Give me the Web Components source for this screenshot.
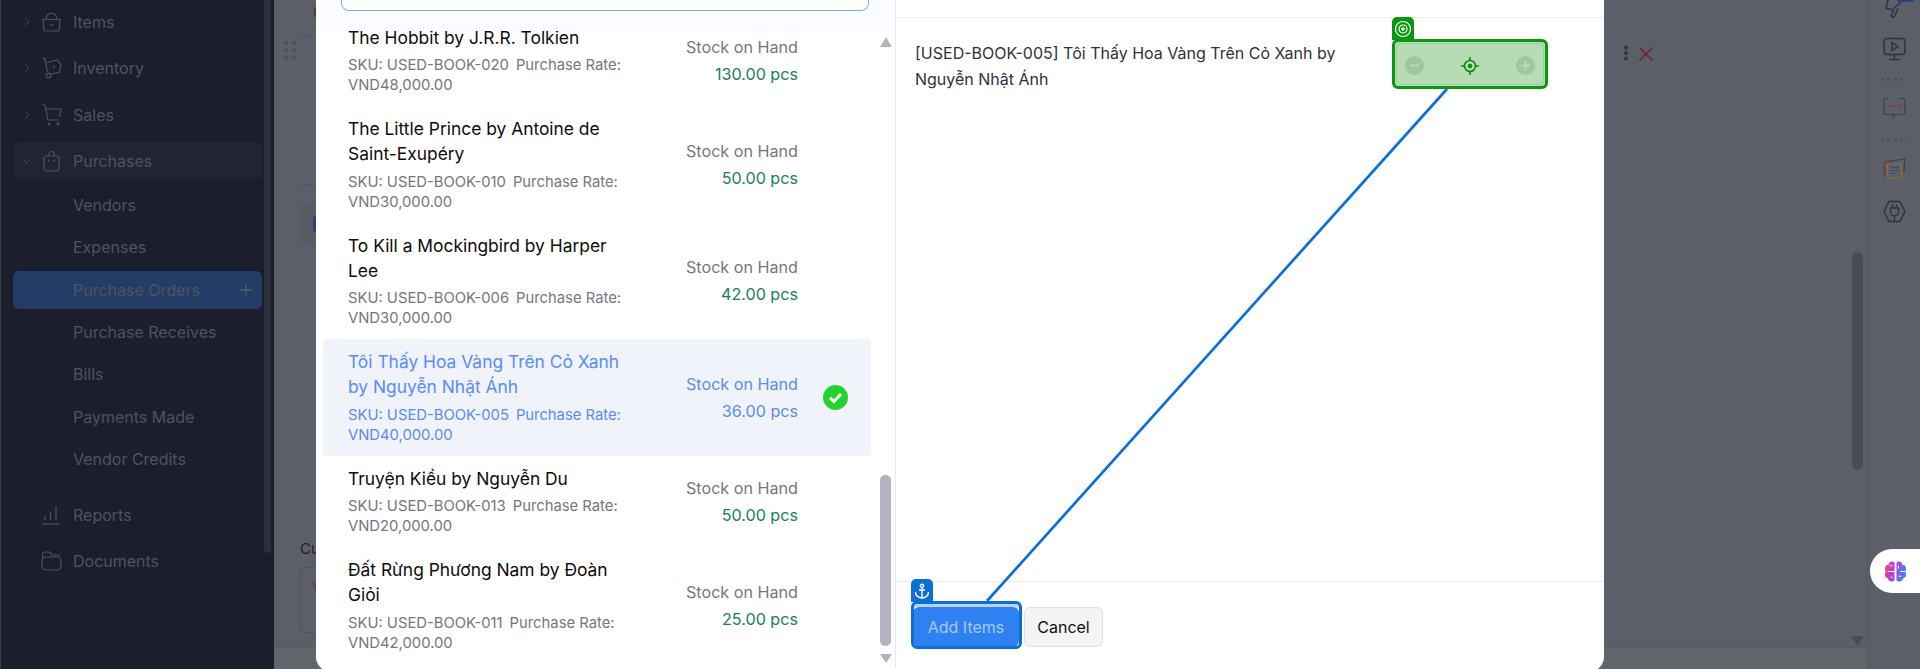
<!DOCTYPE html>
<html>
<head>
<meta charset="utf-8">
<title>Select items</title>
<style>
  html, body { margin: 0; padding: 0; height: 100%; overflow: hidden; }
  body { font-family: Inter, "Noto Sans", sans-serif; background: #5c5f68; }
</style>
</head>
<body>
<app-shell>
  <side-bar slot="side"></side-bar>
  <back-page slot="back"></back-page>
  <item-modal slot="modal">
    <item-row slot="items" name="The Hobbit by J.R.R. Tolkien" sku="USED-BOOK-020" rate="VND48,000.00" stock="130.00 pcs" h="92"></item-row>
    <item-row slot="items" name="The Little Prince by Antoine de Saint-Exupéry" sku="USED-BOOK-010" rate="VND30,000.00" stock="50.00 pcs" h="116"></item-row>
    <item-row slot="items" name="To Kill a Mockingbird by Harper Lee" sku="USED-BOOK-006" rate="VND30,000.00" stock="42.00 pcs" h="116.5"></item-row>
    <item-row slot="items" name="Tôi Thấy Hoa Vàng Trên Cỏ Xanh by Nguyễn Nhật Ánh" sku="USED-BOOK-005" rate="VND40,000.00" stock="36.00 pcs" h="117" selected></item-row>
    <item-row slot="items" name="Truyện Kiều by Nguyễn Du" sku="USED-BOOK-013" rate="VND20,000.00" stock="50.00 pcs" h="91"></item-row>
    <item-row slot="items" name="Đất Rừng Phương Nam by Đoàn Giỏi" sku="USED-BOOK-011" rate="VND42,000.00" stock="25.00 pcs" h="117"></item-row>
  </item-modal>
</app-shell>

<script>
  class AppShell extends HTMLElement {
    constructor() {
      super();
      this.attachShadow({mode: 'open'}).innerHTML = `
        <style>
          :host { display: flex; width: 1920px; height: 669px; position: relative; overflow: hidden; }
          .side { flex: 0 0 274px; }
          .back { flex: 1; min-width: 0; }
        </style>
        <div class="side"><slot name="side"></slot></div>
        <div class="back"><slot name="back"></slot></div>
        <slot name="modal"></slot>
      `;
    }
  }

  const ICONS = {
    items: '<path d="M2 8.500h17l-.7 9a2.500 2.500 0 0 1-2.500 2.500H5.200a2.500 2.500 0 0 1-2.500-2.500z"/><path d="M5 8.500C5 5 7.500 2 10.500 2S16 5 16 8.500"/><path d="M8.500 14h4"/>',
    inventory: '<path d="M1 1l3 .8 2.500 13"/><path d="M6 5.500L16.500 3 20 8l-1.500 7L8.500 17.500"/><circle cx="7.500" cy="18.500" r="2.300"/><circle cx="13" cy="10" r=".5"/>',
    sales: '<path d="M1 1h3l3 15h11"/><path d="M5 5h15l-1.500 8"/><circle cx="8" cy="20" r=".8"/><circle cx="17" cy="20" r=".8"/>',
    purchases: '<rect x="3" y="6" width="15" height="15" rx="3"/><path d="M7.500 6c0-2.500 1.300-4.500 3-4.500s3 2 3 4.500"/><circle cx="8" cy="10.500" r=".4"/><circle cx="13" cy="10.500" r=".4"/>',
    reports: '<path d="M1 20h17"/><path d="M4 11.500v5M9.500 8v8.500M15 2v14.500"/>',
    documents: '<path d="M1.500 8V5a3 3 0 0 1 3-3h4l2.500 3h7a2.500 2.500 0 0 1 1 .5"/><rect x="1" y="7" width="19" height="13" rx="4"/>'
  };

  class SideBar extends HTMLElement {
    constructor() {
      super();
      const top = (icon, label, chev) => `
        <div class="top ${chev === 'open' ? 'open' : ''}">
          <span class="chev">${chev === 'open'
            ? '<svg width="10" height="10" viewBox="0 0 10 10"><path d="M1 3l4 4 4-4"/></svg>'
            : chev ? '<svg width="10" height="10" viewBox="0 0 10 10"><path d="M3 1l4 4-4 4"/></svg>' : ''}</span>
          <svg class="ic" width="21" height="22" viewBox="0 0 21 22">${ICONS[icon]}</svg>
          <span>${label}</span>
        </div>`;
      this.attachShadow({mode: 'open'}).innerHTML = `
        <style>
          :host { display: block; height: 669px; background: #1b1f2d; border-left: 1px solid #3a3c44; box-sizing: border-box; font-size: 16px; color: #4f535f; position: relative; }
          .list { display: flex; flex-direction: column; padding: 3.500px 0 0 12px; width: 261px; box-sizing: border-box; }
          .top { display: flex; align-items: center; height: 37px; margin-bottom: 9.300px; border-radius: 6px; }
          .top.open { background: #212532; }
          .chev { flex: 0 0 28px; display: flex; justify-content: center; }
          .chev svg { fill: none; stroke: #3f434f; stroke-width: 1; }
          .ic { fill: none; stroke: #4f535f; stroke-width: 1.200; margin-right: 11px; flex: none; }
          .sub { height: 38px; display: flex; align-items: center; padding: 0 10px 0 60px; border-radius: 6px; margin-bottom: 4.400px; justify-content: space-between; }
          .sub.on { background: #243d66; }
          .sub svg { stroke: #55596a; stroke-width: 1.300; fill: none; }
          .gap { height: 14px; }
          .thumb { position: absolute; left: 263px; top: 0; width: 7px; height: 553px; background: #2b2f3c; border-radius: 0 0 4px 4px; }
        </style>
        <div class="list">
          ${top('items', 'Items', true)}
          ${top('inventory', 'Inventory', true)}
          ${top('sales', 'Sales', true)}
          ${top('purchases', 'Purchases', 'open')}
          <div class="sub" style="margin-top:-2.800px">Vendors</div>
          <div class="sub">Expenses</div>
          <div class="sub on">Purchase Orders<svg width="12" height="12" viewBox="0 0 12 12"><path d="M6 0v12M0 6h12"/></svg></div>
          <div class="sub">Purchase Receives</div>
          <div class="sub">Bills</div>
          <div class="sub">Payments Made</div>
          <div class="sub">Vendor Credits</div>
          <div class="gap"></div>
          ${top('reports', 'Reports', false)}
          ${top('documents', 'Documents', false)}
        </div>
        <div class="thumb"></div>
      `;
    }
  }

  class BackPage extends HTMLElement {
    constructor() {
      super();
      this.attachShadow({mode: 'open'}).innerHTML = `
        <style>
          :host { display: block; height: 669px; position: relative; color: #16181d; font-size: 15px; }
          .abs { position: absolute; }
          .rail { position: absolute; left: 1593px; top: 0; width: 51px; height: 100%; border-left: 1px solid #565962; }
          .dots { position: absolute; left: 1607px; width: 27px; height: 3px; background-image: repeating-linear-gradient(90deg,#50535c 0 3px,transparent 3px 6.400px); }
          svg { fill: none; display: block; }
        </style>
        <div class="abs" style="left:0;top:647px;width:1593px;height:22px;background:#62656c;border-top:1px solid #575a62;box-sizing:border-box"></div>
        <div class="abs" style="left:9px;top:40px"><svg width="14" height="21" viewBox="0 0 14 21"><g style="fill:#4f525b"><circle cx="3" cy="3" r="2.300"/><circle cx="11" cy="3" r="2.300"/><circle cx="3" cy="10.500" r="2.300"/><circle cx="11" cy="10.500" r="2.300"/><circle cx="3" cy="18" r="2.300"/><circle cx="11" cy="18" r="2.300"/></g></svg></div>
        <div class="abs" style="left:40px;top:7px;width:2px;height:10px;background:#5f3c22"></div>
        <div class="abs" style="left:26px;top:35px;width:16px;height:1px;background:#54575f"></div>
        <div class="abs" style="left:26px;top:184px;width:16px;height:1px;background:#54575f"></div>
        <div class="abs" style="left:26px;top:204px;width:16px;height:40px;background:#585b63;border-radius:6px 0 0 6px"></div>
        <div class="abs" style="left:39px;top:216px;width:3px;height:16px;background:#25467c;border-radius:8px 0 0 8px"></div>
        <div class="abs" style="left:26px;top:539px;color:#1e2026">Cu</div>
        <div class="abs" style="left:26px;top:567px;width:30px;height:66px;border:1px solid #50535c;border-radius:6px;box-sizing:border-box"></div>
        <div class="abs" style="left:38px;top:578px;color:#45474f">V</div>
        <div class="abs" style="left:1349px;top:44px"><svg width="6" height="18" viewBox="0 0 6 18"><g style="fill:#34363c"><circle cx="3" cy="3.500" r="2"/><circle cx="3" cy="9" r="2"/><circle cx="3" cy="14.500" r="2"/></g></svg></div>
        <div class="abs" style="left:1365px;top:46.500px"><svg width="14" height="14" viewBox="0 0 14 14"><path d="M.5 .5l13 13M13.500 .5l-13 13" stroke="#6e2b35" stroke-width="1.800"/></svg></div>
        <div class="abs" style="left:1578px;top:252px;width:11px;height:218px;border-radius:6px;background:#4a4c58"></div>
        <div class="abs" style="left:1577px;top:636px"><svg width="13" height="10" viewBox="0 0 13 10"><path d="M0 0h13L6.500 10z" style="fill:#4a4c58"/></svg></div>
        <div class="rail"></div>
        <div class="abs" style="left:1623px;top:0;width:17px;height:2px;background:#25467c;border-radius:0 0 6px 6px"></div>
        <div class="abs" style="left:1611px;top:0"><svg width="20" height="18" viewBox="0 0 20 18" stroke="#2f3340" stroke-width="1.500"><path d="M3 0L1 8l6 2 9-8"/><path d="M9 10l-3 6 3 1.500 4-9"/></svg></div>
        <div class="abs" style="left:1609px;top:37px"><svg width="23" height="24" viewBox="0 0 23 24" stroke="#2f3340" stroke-width="1.500"><rect x="1" y="1.500" width="21" height="16" rx="3"/><path d="M9 5.500l6 4-6 4zM11.500 17.500V22M6 22.500h11"/></svg></div>
        <div class="dots" style="top:78px"></div>
        <div class="abs" style="left:1609px;top:97px"><svg width="23" height="24" viewBox="0 0 23 24" stroke="#2c4468" stroke-width="1.200"><path d="M6 1.500H3a2 2 0 0 0-2 2v12a2 2 0 0 0 2 2h9l-2.500 4.500M16 1.500h4a2 2 0 0 1 2 2v12a2 2 0 0 1-2 2h-6"/><path d="M6 9h2.200M10.500 9h2.200M15 9h2.200" stroke="#9b2b34" stroke-width="1.800"/></svg></div>
        <div class="dots" style="top:138px"></div>
        <div class="abs" style="left:1609px;top:158px"><svg width="23" height="22" viewBox="0 0 23 22" stroke-width="1.200"><path d="M1 4l6-1v15H2z" stroke="#7a3038"/><path d="M7 3l15-2-1 13" stroke="#2c4468"/><rect x="4.500" y="6" width="14" height="14" rx="1" stroke="#8a7338" style="fill:#5c5f68"/><path d="M7.500 9.500h8M7.500 12.500h8M7.500 15.500h5" stroke="#2c4d80"/></svg></div>
        <div class="abs" style="left:1609px;top:200px"><svg width="23" height="23" viewBox="0 0 23 23" stroke="#2f3340" stroke-width="1.400"><path d="M6 1.500h11l5 10-5 10H6l-5-10z"/><path d="M7.500 8v4a4 4 0 0 0 8 0V8zM9.500 8V4.500M13.500 8V4.500M11.500 16v5.500"/></svg></div>
        <div class="abs" style="left:1596px;top:549px;width:50px;height:44px;background:#fff;border-radius:22px 0 0 22px"></div>
        <div class="abs" style="left:1610px;top:560px"><svg width="23" height="23" viewBox="0 0 24 24"><defs><linearGradient id="br" x1="0" y1="0" x2="1" y2="0.300"><stop offset="0" stop-color="#f06a2a"/><stop offset=".35" stop-color="#d632c8"/><stop offset="1" stop-color="#4d7cf0"/></linearGradient></defs><path d="M11 3a3 3 0 0 0-3-1.500A3.500 3.500 0 0 0 5 5 4 4 0 0 0 1 9c0 1.500.5 2.500 1 3-.5.500-1 1.500-1 3a4 4 0 0 0 3 4c.5 2 2 3.500 4 3.500 1.500 0 2.500-.5 3-1.500zM13 3a3 3 0 0 1 3-1.500A3.500 3.500 0 0 1 19 5a4 4 0 0 1 4 4c0 1.500-.5 2.500-1 3 .5.500 1 1.500 1 3a4 4 0 0 1-3 4c-.5 2-2 3.500-4 3.500-1.500 0-2.500-.5-3-1.500z" style="fill:url(#br)"/><path d="M9 6H6M4 12h7M9 18H7M15 6v3M17 12h5M15 17h3" stroke="#fff" stroke-width="1"/></svg></div>
      `;
    }
  }

  class ItemRow extends HTMLElement {
    constructor() {
      super();
      this.attachShadow({mode: 'open'});
    }
    connectedCallback() {
      const a = n => this.getAttribute(n) || '';
      const sel = this.hasAttribute('selected');
      this.shadowRoot.innerHTML = `
        <style>
          :host { display: flex; align-items: center; box-sizing: border-box; height: ${a('h')}px; border-radius: 4px; padding-left: 25px; background: ${sel ? '#f0f3f9' : 'transparent'}; }
          .left { flex: 0 0 282px; min-width: 0; }
          .name { font-size: 17.400px; line-height: 25px; color: ${sel ? '#5a8bf7' : '#0d0d0d'}; }
          .meta { font-size: 14.800px; line-height: 20px; margin-top: 5.500px; color: ${sel ? '#5a8bf7' : '#75767e'}; }
          .sku { margin-right: 7px; }
          .rate { display: block; }
          .right { flex: 0 0 168px; padding-top: 1px; text-align: right; font-size: 16.150px; line-height: 27px; color: ${sel ? '#5a8bf7' : '#75767e'}; }
          .qty { color: ${sel ? '#5a8bf7' : '#1a8058'}; }
          .check { margin-left: 25px; width: 25px; height: 25px; flex: none; }
        </style>
        <div class="left">
          <div class="name">${a('name')}</div>
          <div class="meta"><span class="sku">SKU: ${a('sku')}</span><span>Purchase Rate:</span><span class="rate">${a('rate')}</span></div>
        </div>
        <div class="right">
          <div>Stock on Hand</div>
          <div class="qty">${a('stock')}</div>
        </div>
        ${sel ? `<svg class="check" viewBox="0 0 25 25"><circle cx="12.500" cy="12.500" r="12.500" fill="#22d330"/><path d="M7 13l4 3.500 7-7.500" fill="none" stroke="#fff" stroke-width="3"/></svg>` : ''}
      `;
    }
  }

  class ItemModal extends HTMLElement {
    constructor() {
      super();
      this.attachShadow({mode: 'open'}).innerHTML = `
        <style>
          :host { position: absolute; left: 316px; top: -10px; width: 1288px; height: 681px; background: #fff; border-radius: 0 0 14px 14px; display: flex; overflow: hidden; color: #0d0d0d; }
          .left { flex: 0 0 579px; border-right: 1px solid #e9e9ed; position: relative; display: flex; flex-direction: column; }
          .head { height: 41px; background: #fbfcff; flex: none; padding-left: 25px; position: relative; z-index: 1; box-sizing: border-box; }
          .search { width: 528px; height: 21px; box-sizing: border-box; border: 1px solid #7fabf0; border-top: 0; border-radius: 0 0 8px 8px; background: #fff; }
          .scroll { flex: 1; display: flex; flex-direction: column; margin-top: -17px; padding-left: 7px; width: 548px; }
          .tr { position: absolute; left: 563.500px; z-index: 1; }
          .thumb { position: absolute; left: 564px; top: 485px; width: 11px; height: 171px; background: #b4b4c1; border-radius: 5px; }
          .right { flex: 1; display: flex; flex-direction: column; min-width: 0; }
          .rhead { height: 28px; border-bottom: 1px solid #ececec; box-sizing: border-box; flex: none; }
          .body { flex: 1; padding: 22px 19px; font-size: 16px; line-height: 26px; color: #303138; }
          .body div { width: 445px; }
          .foot { flex: none; height: 90px; border-top: 1px solid #ececec; display: flex; align-items: flex-start; padding: 25px 0 0 17px; box-sizing: border-box; gap: 5px; }
          .btn { height: 40px; display: flex; align-items: center; justify-content: center; border-radius: 6px; font-size: 16px; box-sizing: border-box; }
          .add { width: 106px; background: #2f81f2; color: #a6c9f7; }
          .cancel { width: 79px; background: #f4f4f4; border: 1px solid #dedede; color: #111; }
        </style>
        <div class="left">
          <div class="head"><div class="search"></div></div>
          <div class="scroll"><slot name="items"></slot></div>
          <svg class="tr" style="top:47px" width="12" height="10" viewBox="0 0 12 10"><path d="M6 0l6 10H0z" fill="#b4b4c1"/></svg>
          <div class="thumb"></div>
          <svg class="tr" style="top:664px" width="12" height="9" viewBox="0 0 12 9"><path d="M0 0h12L6 9z" fill="#b4b4c1"/></svg>
        </div>
        <div class="right">
          <div class="rhead"></div>
          <div class="body"><div>[USED-BOOK-005] Tôi Thấy Hoa Vàng Trên Cỏ Xanh by Nguyễn Nhật Ánh</div></div>
          <div class="foot">
            <div class="btn add">Add Items</div>
            <div class="btn cancel">Cancel</div>
          </div>
        </div>
        <guide-overlay></guide-overlay>
      `;
    }
  }

  // tour builder layer: target and anchor boxes joined by a line
  class GuideOverlay extends HTMLElement {
    constructor() {
      super();
      this.attachShadow({mode: 'open'}).innerHTML = `
        <style>
          :host { position: absolute; inset: 0; pointer-events: none; z-index: 2; }
          .line { position: absolute; left: 0; top: 0; }
          .tab { position: absolute; width: 22px; height: 23px; border-radius: 5px 5px 0 0; display: flex; align-items: center; justify-content: center; }
          .box { position: absolute; box-sizing: border-box; border-radius: 6px; border: 3px solid; }
          .target { left: 1076px; top: 49px; width: 156px; height: 50px; background: #b5dcb5; border-color: #0b960f; display: flex; align-items: center; justify-content: space-between; padding: 3px 10px 0; }
          .target::after { content: ""; position: absolute; inset: 1px; border: 1px solid #9ccb9c; border-radius: 5px; }
          .dot { width: 19px; height: 19px; border-radius: 50%; background: #9fc5a2; display: block; }
          .anchor { left: 595px; top: 611px; width: 111px; height: 48px; border-color: #0b6fd8; box-shadow: inset 0 3px 0 #b7d3f8; }
        </style>
        <svg class="line" width="1288" height="681"><path d="M671 611L1131 99" stroke="#0b6fd8" stroke-width="2.700" fill="none"/></svg>
        <div class="tab" style="left:1076px;top:27px;background:#0b960f">
          <svg width="18" height="18" viewBox="0 0 18 18" fill="none" stroke="#fff" stroke-width="1.200"><circle cx="9" cy="9" r="7.500"/><circle cx="9" cy="9" r="4"/><circle cx="9" cy="9" r="1.200"/></svg>
        </div>
        <div class="box target">
          <span class="dot"><svg width="19" height="19" viewBox="0 0 19 19"><path d="M5 9.500h9" stroke="#b5dcb5" stroke-width="2"/></svg></span>
          <svg width="18" height="18" viewBox="0 0 18 18" fill="none" stroke="#0b8a10" stroke-width="1.600"><circle cx="9" cy="9" r="5.500"/><path d="M9 0v4M9 14v4M0 9h4M14 9h4"/><circle cx="9" cy="9" r="1.500" fill="#0b8a10"/></svg>
          <span class="dot"><svg width="19" height="19" viewBox="0 0 19 19"><path d="M5 9.500h9M9.500 5v9" stroke="#b5dcb5" stroke-width="2"/></svg></span>
        </div>
        <div class="tab" style="left:595px;top:589px;background:#0b6fd8">
          <svg width="16" height="16" viewBox="0 0 16 16" fill="none" stroke="#fff" stroke-width="1.400"><circle cx="8" cy="2.800" r="1.600"/><path d="M8 4.500V15M5 7h6M1.500 9c0 3.500 3 5.500 6.500 6 3.500-.5 6.500-2.500 6.500-6"/></svg>
        </div>
        <div class="box anchor"></div>
      `;
    }
  }

  customElements.define('app-shell', AppShell);
  customElements.define('side-bar', SideBar);
  customElements.define('back-page', BackPage);
  customElements.define('item-row', ItemRow);
  customElements.define('guide-overlay', GuideOverlay);
  customElements.define('item-modal', ItemModal);
</script>
</body>
</html>
